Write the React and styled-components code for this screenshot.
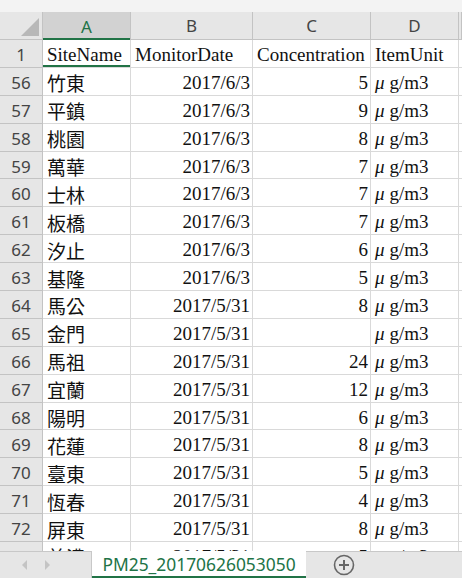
import React from "react";
import styled, { createGlobalStyle } from "styled-components";

const GlobalStyle = createGlobalStyle`
  html, body { margin: 0; padding: 0; background: #ffffff; }
  * { box-sizing: border-box; }
`;

const COLS = "43px 88px 122px 118px 88px 1fr";
const GRID = "#d9d9d9";
const HEAD_LINE = "#c3c3c3";
const GREEN = "#217346";

const Sheet = styled.div`
  width: 462px;
  height: 578px;
  display: flex;
  flex-direction: column;
  overflow: hidden;
  background: #ffffff;
`;

const TopStrip = styled.div`
  height: 12px;
  flex: none;
  background: #f3f3f3;
`;

const Grid = styled.div`
  flex: 1;
  overflow: hidden;
  display: flex;
  flex-direction: column;
`;

const HeaderRow = styled.div`
  display: grid;
  grid-template-columns: ${COLS};
  height: 28px;
  flex: none;
  background: #e6e6e6;
  border-bottom: 1px solid ${HEAD_LINE};
`;

const Corner = styled.div`
  position: relative;
  border-right: 1px solid ${HEAD_LINE};
  &::after {
    content: "";
    position: absolute;
    right: 3px;
    bottom: 3px;
    width: 0;
    height: 0;
    border-left: 18px solid transparent;
    border-bottom: 18px solid #b8b8b8;
  }
`;

const ColHead = styled.div`
  display: flex;
  align-items: center;
  justify-content: center;
  font-family: "Noto Sans", "Open Sans", sans-serif;
  font-size: 17px;
  color: ${(p) => (p.$active ? GREEN : "#444444")};
  background: ${(p) => (p.$active ? "#d2d2d2" : "transparent")};
  border-right: 1px solid ${HEAD_LINE};
  box-shadow: ${(p) => (p.$active ? `inset 0 -2px 0 ${GREEN}` : "none")};
  margin-bottom: ${(p) => (p.$active ? "-1px" : "0")};
`;

const Row = styled.div`
  display: grid;
  grid-template-columns: ${COLS};
  height: 27.9px;
  flex: none;
`;

const RowHead = styled.div`
  display: flex;
  align-items: center;
  justify-content: center;
  padding-top: 2px;
  background: #e6e6e6;
  border-right: 1px solid ${HEAD_LINE};
  border-bottom: 1px solid ${HEAD_LINE};
  font-family: "Noto Sans", "Open Sans", sans-serif;
  font-size: 17px;
  color: #444444;
`;

const Cell = styled.div`
  display: flex;
  align-items: center;
  justify-content: ${(p) => (p.$right ? "flex-end" : "flex-start")};
  padding: 3px ${(p) => (p.$right ? "2px" : "0")} 0 ${(p) => (p.$right ? "0" : "4px")};
  border-right: 1px solid ${GRID};
  border-bottom: 1px solid ${GRID};
  box-shadow: ${(p) => (p.$selected ? `inset 0 -2px 0 ${GREEN}` : "none")};
  font-family: "Liberation Serif", "Noto Sans CJK TC", serif;
  font-size: 19px;
  color: #111111;
  white-space: nowrap;
  overflow: hidden;
`;

const Mu = styled.span`
  font-style: italic;
  margin-right: 5px;
`;

const TabBar = styled.div`
  height: 27px;
  flex: none;
  display: flex;
  align-items: stretch;
  background: #e6e6e6;
  border-top: 1px solid #c8c8c8;
`;

const Nav = styled.div`
  width: 92px;
  display: flex;
  align-items: center;
  gap: 18px;
  padding-left: 22px;
  border-right: 1px solid #c8c8c8;
`;

const Arrow = styled.span`
  width: 0;
  height: 0;
  border-top: 5px solid transparent;
  border-bottom: 5px solid transparent;
  ${(p) =>
    p.$dir === "left"
      ? "border-right: 5px solid #c4c4c4;"
      : "border-left: 5px solid #c4c4c4;"}
`;

const Tab = styled.div`
  width: 214px;
  margin-top: -1px;
  display: flex;
  align-items: center;
  justify-content: center;
  background: #ffffff;
  border-bottom: 2px solid ${GREEN};
  font-family: "Noto Sans", "Open Sans", sans-serif;
  font-size: 17.4px;
  color: ${GREEN};
`;

const AddButton = styled.div`
  width: 76px;
  display: flex;
  align-items: center;
  justify-content: center;
  color: #666666;
`;

const rows = [
  [56, "竹東", "2017/6/3", "5"],
  [57, "平鎮", "2017/6/3", "9"],
  [58, "桃園", "2017/6/3", "8"],
  [59, "萬華", "2017/6/3", "7"],
  [60, "士林", "2017/6/3", "7"],
  [61, "板橋", "2017/6/3", "7"],
  [62, "汐止", "2017/6/3", "6"],
  [63, "基隆", "2017/6/3", "5"],
  [64, "馬公", "2017/5/31", "8"],
  [65, "金門", "2017/5/31", ""],
  [66, "馬祖", "2017/5/31", "24"],
  [67, "宜蘭", "2017/5/31", "12"],
  [68, "陽明", "2017/5/31", "6"],
  [69, "花蓮", "2017/5/31", "8"],
  [70, "臺東", "2017/5/31", "5"],
  [71, "恆春", "2017/5/31", "4"],
  [72, "屏東", "2017/5/31", "8"],
  [73, "美濃", "2017/5/31", "5"],
];

const Unit = () => (
  <>
    <Mu>μ</Mu>g/m3
  </>
);

export default function App() {
  return (
    <>
      <GlobalStyle />
      <Sheet>
        <TopStrip />
        <Grid>
          <HeaderRow>
            <Corner />
            <ColHead $active>A</ColHead>
            <ColHead>B</ColHead>
            <ColHead>C</ColHead>
            <ColHead>D</ColHead>
            <ColHead />
          </HeaderRow>
          <Row>
            <RowHead>1</RowHead>
            <Cell $selected>SiteName</Cell>
            <Cell>MonitorDate</Cell>
            <Cell>Concentration</Cell>
            <Cell>ItemUnit</Cell>
            <Cell />
          </Row>
          {rows.map(([n, site, date, conc]) => (
            <Row key={n}>
              <RowHead>{n}</RowHead>
              <Cell>{site}</Cell>
              <Cell $right>{date}</Cell>
              <Cell $right>{conc}</Cell>
              <Cell>
                <Unit />
              </Cell>
              <Cell />
            </Row>
          ))}
        </Grid>
        <TabBar>
          <Nav>
            <Arrow $dir="left" />
            <Arrow $dir="right" />
          </Nav>
          <Tab>PM25_20170626053050</Tab>
          <AddButton>
            <svg width="22" height="22" viewBox="0 0 22 22">
              <circle cx="11" cy="11" r="9.5" fill="none" stroke="#666" strokeWidth="1.6" />
              <path d="M11 6v10M6 11h10" stroke="#666" strokeWidth="2" />
            </svg>
          </AddButton>
        </TabBar>
      </Sheet>
    </>
  );
}
